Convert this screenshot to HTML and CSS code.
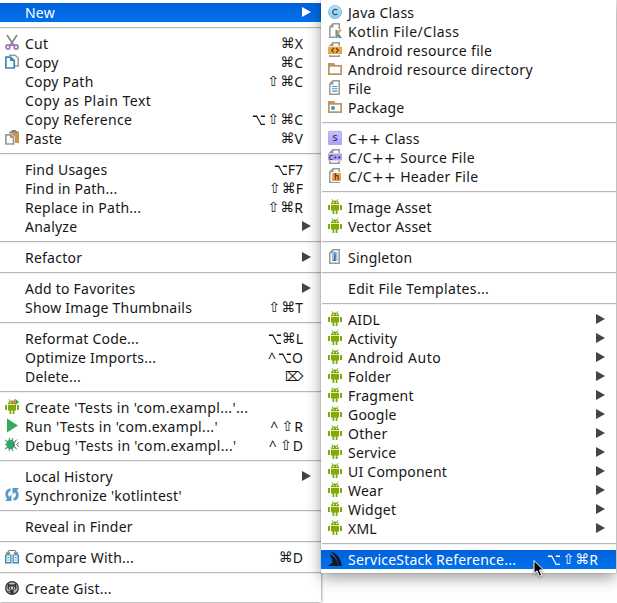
FILE: index.html
```
<!DOCTYPE html>
<html lang="en">
<head>
<meta charset="utf-8">
<title>Context menu</title>
<link rel="stylesheet" href="styles.css">
</head>
<body>
<svg class="defs" aria-hidden="true">
<defs>
<linearGradient id="blue" x1="0" y1="0" x2="0" y2="1"><stop offset="0" stop-color="#b9e2fb"/><stop offset="1" stop-color="#8ccbf3"/></linearGradient>
<linearGradient id="violet" x1="0" y1="0" x2="0" y2="1"><stop offset="0" stop-color="#c9c1ff"/><stop offset="1" stop-color="#aca0f4"/></linearGradient>
<symbol id="android" viewBox="0 0 14 15">
<path fill="#82aa0b" d="M3 5C3 2.9 4.700 1.500 7 1.500S11 2.900 11 5ZM3 5.700H11V11.500H9.500V15H7.700V11.500H6.300V15H4.500V11.500H3ZM0 6H2V11H0ZM12 6H14V11H12Z"/>
<path stroke="#82aa0b" stroke-width=".9" d="M4 .2 5 2M10 .2 9 2"/><path fill="#fff" d="M5 3h1v1H5zM8 3h1v1H8z"/>
</symbol>
<symbol id="cut" viewBox="0 0 14 15">
<path fill="none" stroke="#858585" stroke-width="1.700" d="M2 0 8.500 10M12 0 5.500 10"/>
<g fill="none" stroke="#a77bbd" stroke-width="1.800"><circle cx="2.900" cy="12" r="2"/><circle cx="11.100" cy="12" r="2"/></g><path stroke="#a77bbd" stroke-width="1.500" d="M4.500 10.500 7 9 9.500 10.500"/>
</symbol>
<symbol id="copy" viewBox="0 0 14 15">
<path fill="none" stroke="#999" stroke-width="1.500" d="M4 1.200H10L13.200 4V12H10"/><path fill="#fff" stroke="#4189b0" stroke-width="1.700" d="M.9 3.200H5.500L9.200 6.500V14H.9Z"/><path fill="#4189b0" d="M5 3 9.500 7H5Z"/>
</symbol>
<symbol id="paste" viewBox="0 0 14 15">
<path fill="#c8964c" d="M4 1.500H14V13H10V7L6 3.500H4Z"/><path fill="#858585" d="M6.500 0H11V1H12V2.500H6Z"/><path fill="#fff" stroke="#999" stroke-width="1.700" d="M.9 4.800H5.500L8.500 7.500V14H.9Z"/><path fill="#999" d="M5 4 9 8H5Z"/>
</symbol>
<symbol id="java" viewBox="0 0 14 15">
<circle cx="7" cy="8" r="6.600" fill="url(#blue)" stroke="#73b3dc" stroke-width=".7"/><path fill="none" stroke="#36454f" stroke-width="1.200" d="M9.300 6C7.400 4.600 4.700 5.500 4.700 8S7.400 11.400 9.300 10"/>
</symbol>
<symbol id="sheet" viewBox="0 0 14 15"><path fill="#fff" stroke="#999" stroke-width="1.500" d="M5 .8H11.200V14.200H1.800V4Z"/><path fill="#999" d="M5.500.2V4.500H1.200Z"/></symbol>
<symbol id="kotlin" viewBox="0 0 14 15"><use href="#sheet"/><path fill="#fff" d="M7 6h7v9H7z"/><path fill="#3f8fbd" d="M7.500 7H9.500V15H7.500Z"/><path fill="#ef9a32" d="M14 6.500 8.500 14V10.500L11 6.500Z"/><path fill="#3f8fbd" d="M10.500 10.500 14 15H11L9 12.500Z"/></symbol>
<symbol id="resource" viewBox="0 0 14 15"><use href="#sheet"/><path fill="#fff" d="M0 4h14v9H0z"/><path fill="#efa742" d="M0 4.700H14V12H0Z"/><path fill="none" stroke="#594420" stroke-width="1.200" d="M6 6 3.700 8.300 6 10.600M8 6 10.300 8.300 8 10.600"/></symbol>
<symbol id="folder" viewBox="0 0 14 15"><path fill="#bd9564" d="M0 2H6L7.500 4H14V14H0Z"/><path fill="#fff" d="M1.700 5.700H12.300V12.300H1.700Z"/></symbol>
<symbol id="file" viewBox="0 0 14 15"><use href="#sheet"/><path stroke="#4795bd" stroke-width="1.100" d="M4 6.500H9.500M4 8.800H9.500M4 11.100H9.500"/></symbol>
<symbol id="package" viewBox="0 0 14 15"><use href="#folder"/><circle cx="5" cy="9" r="2" fill="#3f94c5"/></symbol>
<symbol id="cppclass" viewBox="0 0 14 15"><rect x=".3" y="1.300" width="13.400" height="13.400" rx="1" fill="url(#violet)" stroke="#9d90e3" stroke-width=".6"/><text x="7" y="11.200" class="glyph" font-size="9">S</text></symbol>
<symbol id="cppsource" viewBox="0 0 14 15"><use href="#sheet"/><path fill="#fff" d="M0 4h14v8H0z"/><path fill="#b4a3f2" d="M0 4.500H14V11.500H0Z"/><text x="7" y="10.600" class="glyph" font-size="7">C++</text></symbol>
<symbol id="header" viewBox="0 0 14 15"><use href="#sheet"/><path fill="#fff" d="M3.500 4H14V14H3.500Z"/><path fill="#f2a43a" d="M4 5H13V13H4Z"/><text x="8.500" y="11.700" class="glyph" font-size="8">h</text></symbol>
<symbol id="singleton" viewBox="0 0 14 15"><use href="#sheet"/><path fill="#8ac6ed" d="M4 3H9.500V12H4Z"/><text x="6.800" y="10.200" class="glyph" font-size="8">j</text></symbol>
<symbol id="create" viewBox="0 0 14 15"><use href="#android"/><path fill="#ee7770" d="M10.500 0V6L7 3Z"/><path fill="#18b24b" d="M10.500 0 14 3 10.500 6Z"/></symbol>
<symbol id="run" viewBox="0 0 14 15"><path fill="#36a95c" d="M2 .5 13 7.500 2 14.500Z"/></symbol>
<symbol id="debug" viewBox="0 0 14 15"><path fill="none" stroke="#4f9f72" stroke-width="1.100" d="M0 3 3 5M0 7.500H3M0 12 3 10M4 1 5 4M4 14 5 11M8 1 7 4M8 14 7 11"/><ellipse cx="5.500" cy="7.500" rx="4.300" ry="4.800" fill="#36a466"/><path fill="none" stroke="#666" stroke-width="1" d="M11 4C8.500 5 8.500 10 11 11M12 2.500 10 4.500M12 12.500 10 10.500M14 5.500 11.500 7.500 14 9.500"/></symbol>
<symbol id="sync" viewBox="0 0 14 15"><path fill="none" stroke="#579bc6" stroke-width="2.800" d="M5.500 2.500C1 3.500 .5 8.500 4 12M8.500 12.500C13 11.500 13.500 6.500 10 3"/><path fill="#579bc6" d="M6.500 7.500V14H0ZM7.500 7.500V1H14Z"/></symbol>
<symbol id="compare" viewBox="0 0 14 15"><path fill="none" stroke="#777" stroke-width="1.100" d="M3 5V3.500Q3 1.500 5 1.500H9Q11 1.500 11 3.500V5M1 3.500 3 5.500 5 3.500M9 3.500 11 5.500 13 3.500"/><path fill="#4189b0" d="M0 5.500H6.500V14.500H0ZM7.500 5.500H14V14.500H7.500Z"/><path fill="#fff" d="M1.500 6.500H5.200V13H1.500ZM8.800 6.500H12.500V13H8.800Z"/><path stroke="#4795bd" d="M2.200 8.500H4.500M2.200 11H4.500M9.500 8.500H11.800M9.500 11H11.800"/></symbol>
<symbol id="gist" viewBox="0 0 14 15"><circle cx="7" cy="8" r="6.300" fill="#bbb" stroke="#333" stroke-width="1.300"/><path fill="#333" d="M3 3.500 5 4.500H9L11 3.500 11.500 7Q11.500 10 8.500 10.500L9 14H5.500V12.500L3.500 12 3 11 5 11.500 5.500 10.500Q2.500 10 2.500 7Z"/><rect x="3.800" y="6.500" width="6.400" height="3" rx="1.500" fill="#ccc"/><path fill="#333" d="M5 7h1v2H5zM8 7h1v2H8z"/></symbol>
<symbol id="servicestack" viewBox="0 0 14 15"><path fill="#101820" d="M2 .5C8 1 12.500 7 14 15H10.600C10 9 7 3.500 2 .5ZM1.500 3C6.500 5 10 10 10.200 15H0L4.500 11.500C4.500 8.500 3 6 1.500 3Z"/></symbol>
</defs>
</svg>
<main class="menus">
<ul class="menu main">
<li class="row selected"><span class="label">New</span><i class="arrow"></i></li>
<li class="sep"></li>
<li class="row"><svg class="icon"><use href="#cut"/></svg><span class="label">Cut</span><kbd><b>⌘</b>X</kbd></li>
<li class="row"><svg class="icon"><use href="#copy"/></svg><span class="label">Copy</span><kbd><b>⌘</b>C</kbd></li>
<li class="row"><span class="label">Copy Path</span><kbd><b>⇧</b><b>⌘</b>C</kbd></li>
<li class="row"><span class="label loose">Copy as Plain Text</span></li>
<li class="row"><span class="label open">Copy Reference</span><kbd><b class="opt">⌥</b><b>⇧</b><b>⌘</b>C</kbd></li>
<li class="row"><svg class="icon"><use href="#paste"/></svg><span class="label">Paste</span><kbd><b>⌘</b>V</kbd></li>
<li class="sep"></li>
<li class="row"><span class="label">Find Usages</span><kbd><b class="opt">⌥</b>F7</kbd></li>
<li class="row"><span class="label">Find in Path...</span><kbd><b>⇧</b><b>⌘</b>F</kbd></li>
<li class="row"><span class="label">Replace in Path...</span><kbd><b>⇧</b><b>⌘</b>R</kbd></li>
<li class="row"><span class="label">Analyze</span><i class="arrow"></i></li>
<li class="sep"></li>
<li class="row"><span class="label">Refactor</span><i class="arrow"></i></li>
<li class="sep"></li>
<li class="row"><span class="label">Add to Favorites</span><i class="arrow"></i></li>
<li class="row"><span class="label">Show Image Thumbnails</span><kbd><b>⇧</b><b>⌘</b>T</kbd></li>
<li class="sep"></li>
<li class="row"><span class="label">Reformat Code...</span><kbd><b class="opt">⌥</b><b>⌘</b>L</kbd></li>
<li class="row"><span class="label">Optimize Imports...</span><kbd><span class="ctrl">^</span><b class="opt">⌥</b>O</kbd></li>
<li class="row"><span class="label">Delete...</span><kbd><b class="del">⌦</b></kbd></li>
<li class="sep"></li>
<li class="row"><svg class="icon"><use href="#create"/></svg><span class="label open">Create 'Tests in 'com.exampl...'...</span></li>
<li class="row"><svg class="icon"><use href="#run"/></svg><span class="label open">Run 'Tests in 'com.exampl...'</span><kbd><span class="ctrl">^</span><b>⇧</b>R</kbd></li>
<li class="row"><svg class="icon"><use href="#debug"/></svg><span class="label open">Debug 'Tests in 'com.exampl...'</span><kbd><span class="ctrl">^</span><b>⇧</b>D</kbd></li>
<li class="sep"></li>
<li class="row"><span class="label">Local History</span><i class="arrow"></i></li>
<li class="row"><svg class="icon"><use href="#sync"/></svg><span class="label">Synchronize 'kotlintest'</span></li>
<li class="sep"></li>
<li class="row"><span class="label">Reveal in Finder</span></li>
<li class="sep"></li>
<li class="row"><svg class="icon"><use href="#compare"/></svg><span class="label">Compare With...</span><kbd><b>⌘</b>D</kbd></li>
<li class="sep"></li>
<li class="row"><svg class="icon"><use href="#gist"/></svg><span class="label">Create Gist...</span></li>
</ul>
<ul class="menu sub">
<li class="row"><svg class="icon"><use href="#java"/></svg><span class="label">Java Class</span></li>
<li class="row"><svg class="icon"><use href="#kotlin"/></svg><span class="label loose">Kotlin File/Class</span></li>
<li class="row"><svg class="icon"><use href="#resource"/></svg><span class="label open">Android resource file</span></li>
<li class="row"><svg class="icon"><use href="#folder"/></svg><span class="label open">Android resource directory</span></li>
<li class="row"><svg class="icon"><use href="#file"/></svg><span class="label">File</span></li>
<li class="row"><svg class="icon"><use href="#package"/></svg><span class="label">Package</span></li>
<li class="sep"></li>
<li class="row"><svg class="icon"><use href="#cppclass"/></svg><span class="label">C<span class="plus">++</span> Class</span></li>
<li class="row"><svg class="icon"><use href="#cppsource"/></svg><span class="label open">C/C<span class="plus">++</span> Source File</span></li>
<li class="row"><svg class="icon"><use href="#header"/></svg><span class="label open">C/C<span class="plus">++</span> Header File</span></li>
<li class="sep"></li>
<li class="row"><svg class="icon"><use href="#android"/></svg><span class="label">Image Asset</span></li>
<li class="row"><svg class="icon"><use href="#android"/></svg><span class="label">Vector Asset</span></li>
<li class="sep"></li>
<li class="row"><svg class="icon"><use href="#singleton"/></svg><span class="label">Singleton</span></li>
<li class="sep"></li>
<li class="row"><span class="label open">Edit File Templates...</span></li>
<li class="sep"></li>
<li class="row"><svg class="icon"><use href="#android"/></svg><span class="label">AIDL</span><i class="arrow"></i></li>
<li class="row"><svg class="icon"><use href="#android"/></svg><span class="label">Activity</span><i class="arrow"></i></li>
<li class="row"><svg class="icon"><use href="#android"/></svg><span class="label loose">Android Auto</span><i class="arrow"></i></li>
<li class="row"><svg class="icon"><use href="#android"/></svg><span class="label">Folder</span><i class="arrow"></i></li>
<li class="row"><svg class="icon"><use href="#android"/></svg><span class="label">Fragment</span><i class="arrow"></i></li>
<li class="row"><svg class="icon"><use href="#android"/></svg><span class="label">Google</span><i class="arrow"></i></li>
<li class="row"><svg class="icon"><use href="#android"/></svg><span class="label">Other</span><i class="arrow"></i></li>
<li class="row"><svg class="icon"><use href="#android"/></svg><span class="label">Service</span><i class="arrow"></i></li>
<li class="row"><svg class="icon"><use href="#android"/></svg><span class="label">UI Component</span><i class="arrow"></i></li>
<li class="row"><svg class="icon"><use href="#android"/></svg><span class="label">Wear</span><i class="arrow"></i></li>
<li class="row"><svg class="icon"><use href="#android"/></svg><span class="label">Widget</span><i class="arrow"></i></li>
<li class="row"><svg class="icon"><use href="#android"/></svg><span class="label">XML</span><i class="arrow"></i></li>
<li class="sep"></li>
<li class="row selected"><svg class="icon"><use href="#servicestack"/></svg><span class="label">ServiceStack Reference...</span><kbd><b class="opt">⌥</b><b>⇧</b><b>⌘</b>R</kbd></li>
</ul>
</main>
<svg class="cursor" viewBox="0 0 12 18"><path fill="#000" stroke="#fff" d="M1 1V14L4 11.300 6.300 16.800 8.700 15.800 6.400 10.500H10.500Z"/></svg>
</body>
</html>
```
FILE: styles.css
```
* { box-sizing: border-box; }
body { margin: 0; height: 603px; overflow: hidden; background: #fff; position: relative; }
.defs { display: block; width: 0; height: 0; }
.menus { display: flex; align-items: flex-start; }
.menu {
  margin: 0; padding: 3px 0 4px; list-style: none; background: #fff; color: #161616;
  font: 14px/19px "Noto Sans", "Open Sans", sans-serif; letter-spacing: 0.23px;
}
.main { width: 321px; box-shadow: 0 0 3px rgba(0,0,0,.65); }
.sub { width: 295px; position: relative; box-shadow: 0 0 1px rgba(0,0,0,.45), 0 5px 14px rgba(0,0,0,.38); }
.row { display: grid; grid-template-columns: 14px 1fr auto; column-gap: 6px; height: 19px; padding: 0 18px 0 5px; white-space: nowrap; }
.sub .row { padding: 0 18px 0 7px; }
.selected { color: #fff; background: linear-gradient(#0060d8, #0072ed); }
.icon { grid-column: 1; width: 14px; height: 15px; margin-top: 1px; }
.label { grid-column: 2; height: 19px; }
.open { letter-spacing: 0.35px; }
.loose { letter-spacing: 0.5px; }
.plus { font-family: "DejaVu Sans", sans-serif; }
.arrow { grid-column: 3; width: 9px; height: 10px; margin: 4px -7px 0 0; background: #444; clip-path: polygon(0 0, 100% 50%, 0 100%); }
.main .arrow { margin-right: -8px; }
.selected .arrow { background: #fff; }
kbd { grid-column: 3; display: flex; font: inherit; letter-spacing: 0; }
kbd b { width: 14px; text-align: center; font: 14px/19px "DejaVu Sans", sans-serif; }
kbd .opt { font-size: 11px; width: 14px; transform: scale(1.1, 1.5); }
kbd .del { width: 18px; font-size: 13px; }
.ctrl { width: 10px; }
.sep { height: 12px; padding-top: 5px; }
.sep::before { content: ""; display: block; height: 1px; background: #b9b9b9; box-shadow: 0 1px #f2f2f2; }
.sub .sep::before { margin-left: 1px; }
.glyph { font-family: "Noto Sans", sans-serif; font-weight: 600; text-anchor: middle; fill: #393058; letter-spacing: 0; }
.cursor { position: absolute; left: 533px; top: 559px; width: 12px; height: 19px; filter: drop-shadow(0 1px 1px rgba(0,0,0,.4)); }
```
